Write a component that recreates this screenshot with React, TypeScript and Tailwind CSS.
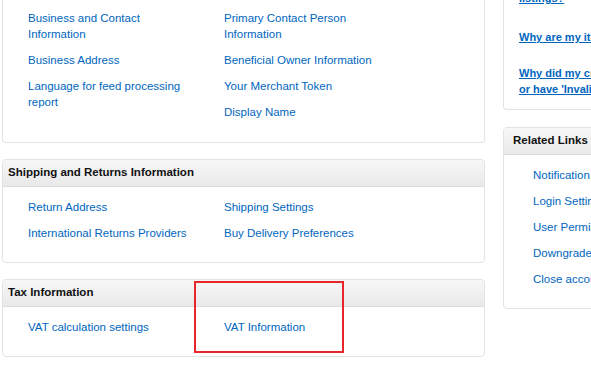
const font = { fontFamily: '"Liberation Sans", Arial, sans-serif' };

function LinkList({ items }: { items: string[] }) {
  return (
    <ul className="flex flex-col gap-[10px]">
      {items.map((t) => (
        <li key={t} className="text-[#0066c0] text-[11.5px] leading-[16px]">
          {t}
        </li>
      ))}
    </ul>
  );
}

function CardHeader({ title }: { title: string }) {
  return (
    <div className="h-[27px] flex items-center pl-[5px] bg-gradient-to-b from-[#f7f7f7] to-[#e9e9e9] border-b border-[#dedede] rounded-t-[4px]">
      <h3 className="text-[11.5px] font-bold text-[#111]">{title}</h3>
    </div>
  );
}

function Col({ children }: { children: React.ReactNode }) {
  return (
    <div className="w-[196px]">
      <div className="max-w-[165px]">{children}</div>
    </div>
  );
}

export default function App() {
  return (
    <div style={font} className="relative w-[591px] h-[374px] overflow-hidden bg-white">
      <div className="flex gap-[18px] pl-[2px]">
        {/* main column */}
        <div className="w-[483px] shrink-0 flex flex-col gap-[16px]">
          <div className="border border-t-0 border-[#e3e3e3] rounded-b-[4px] pt-[10px] pb-[22px] pl-[25px] flex">
            <Col>
              <LinkList
                items={[
                  "Business and Contact Information",
                  "Business Address",
                  "Language for feed processing report",
                ]}
              />
            </Col>
            <Col>
              <LinkList
                items={[
                  "Primary Contact Person Information",
                  "Beneficial Owner Information",
                  "Your Merchant Token",
                  "Display Name",
                ]}
              />
            </Col>
          </div>

          <div className="border border-[#e3e3e3] rounded-[4px]">
            <CardHeader title="Shipping and Returns Information" />
            <div className="pt-[12px] pb-[21px] pl-[25px] flex">
              <Col>
                <LinkList items={["Return Address", "International Returns Providers"]} />
              </Col>
              <Col>
                <LinkList items={["Shipping Settings", "Buy Delivery Preferences"]} />
              </Col>
            </div>
          </div>

          <div className="border border-[#e3e3e3] rounded-[4px]">
            <CardHeader title="Tax Information" />
            <div className="pt-[12px] pb-[21px] pl-[25px] flex">
              <Col>
                <LinkList items={["VAT calculation settings"]} />
              </Col>
              <Col>
                <LinkList items={["VAT Information"]} />
              </Col>
            </div>
          </div>
        </div>

        {/* side column */}
        <div className="w-[200px] shrink-0 flex flex-col gap-[17px]">
          <div className="border border-t-0 border-[#e3e3e3] rounded-b-[4px] -mt-[10px] pb-[12px] pl-[15px]">
            <ul className="flex flex-col gap-[20px] text-[11px] leading-[16px] font-bold text-[#0066c0] underline whitespace-nowrap">
              <li>listings?</li>
              <li className="-mt-[-3px]">Why are my items suppressed?</li>
              <li>
                Why did my credit card fail
                <br />
                or have 'Invalid' status?
              </li>
            </ul>
          </div>

          <div className="border border-[#e3e3e3] rounded-[4px]">
            <div className="h-[27px] flex items-center pl-[9px] bg-gradient-to-b from-[#f7f7f7] to-[#e9e9e9] border-b border-[#dedede] rounded-t-[4px]">
              <h3 className="text-[11.5px] font-bold text-[#111]">Related Links</h3>
            </div>
            <div className="pt-[12px] pb-[21px] pl-[29px] whitespace-nowrap">
              <LinkList
                items={[
                  "Notification Preferences",
                  "Login Settings",
                  "User Permissions",
                  "Downgrade account",
                  "Close account",
                ]}
              />
            </div>
          </div>
        </div>
      </div>

      {/* highlight annotation */}
      <div className="absolute left-[194px] top-[281px] w-[150px] h-[72px] border-2 border-[#e8262a] pointer-events-none" />
    </div>
  );
}
